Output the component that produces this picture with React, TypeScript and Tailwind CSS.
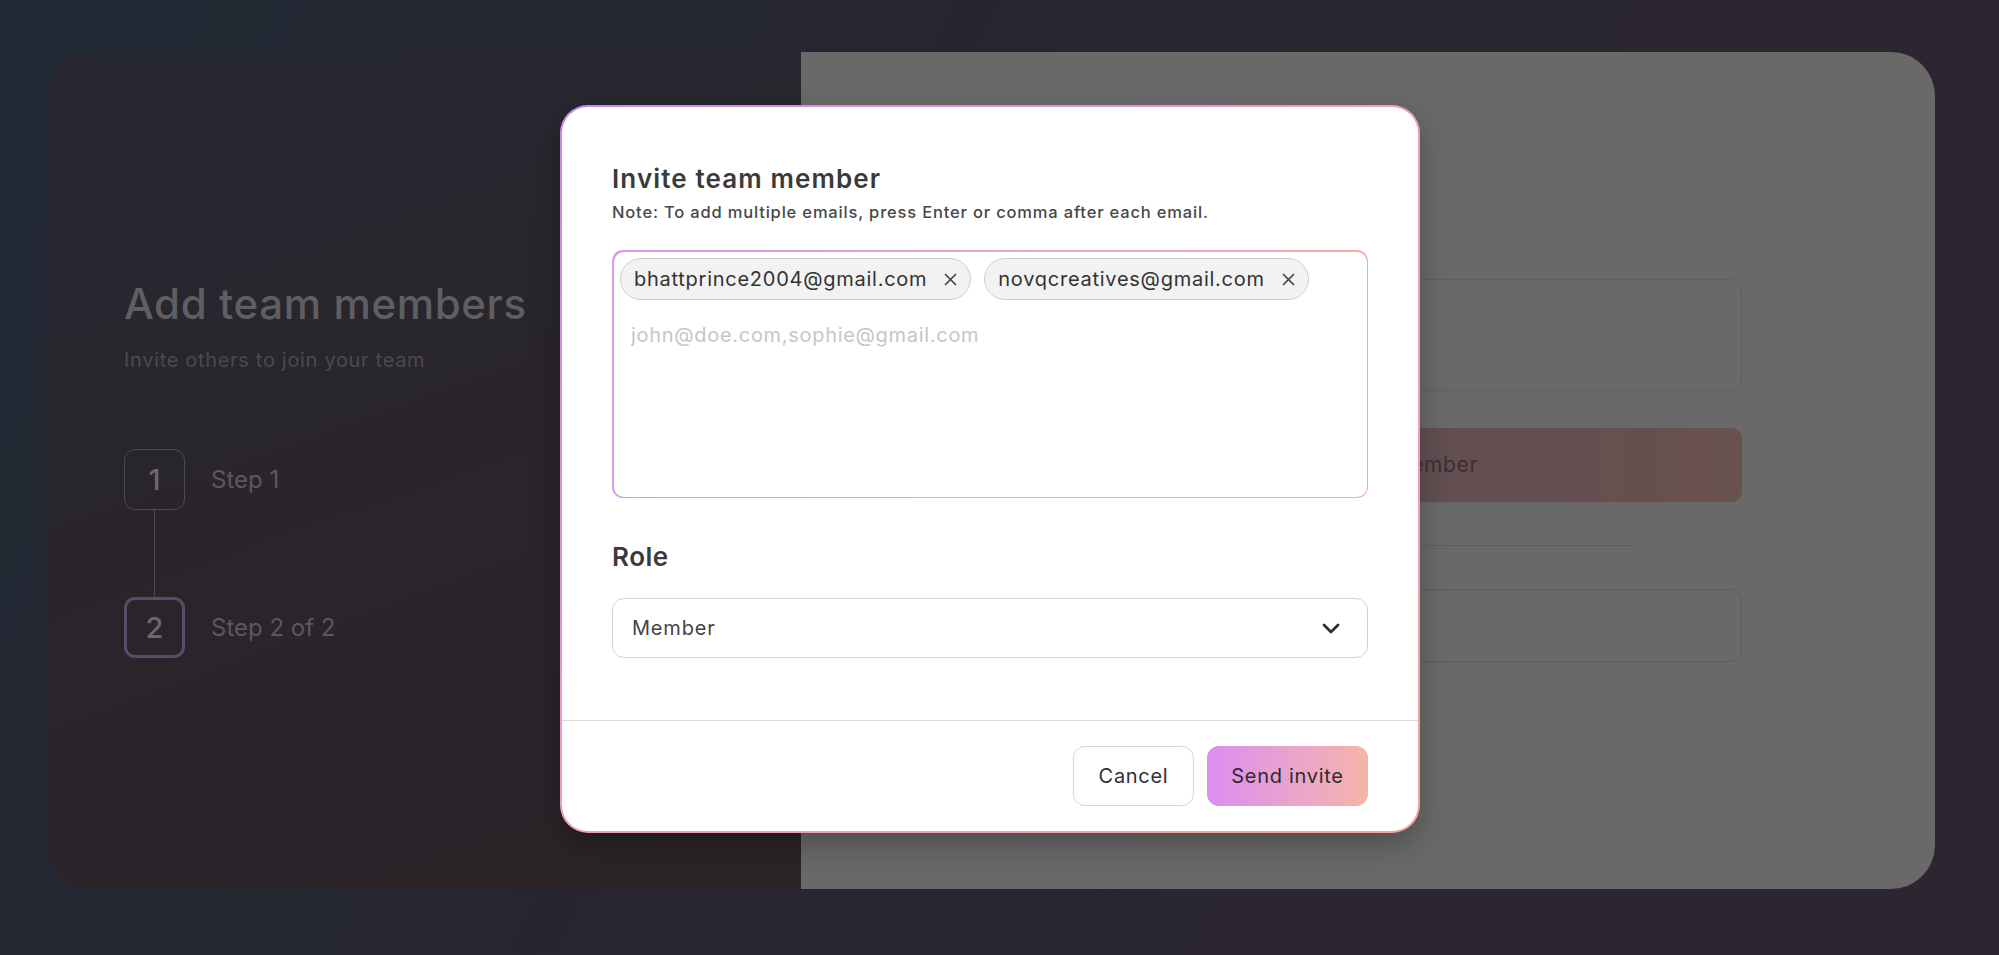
import { useState } from 'react'

const emailsInit = ['bhattprince2004@gmail.com', 'novqcreatives@gmail.com']

function CloseIcon() {
  return (
    <svg width="13" height="13" viewBox="0 0 13 13" fill="none" stroke="#444" strokeWidth="1.7" strokeLinecap="round">
      <path d="M1.5 1.5l10 10M11.5 1.5l-10 10" />
    </svg>
  )
}

function Chevron() {
  return (
    <svg width="18" height="11" viewBox="0 0 18 11" fill="none" stroke="#2e2e2e" strokeWidth="2.8" strokeLinecap="round" strokeLinejoin="round">
      <path d="M2 2l7 7 7-7" />
    </svg>
  )
}

function StepBox({ n, active }: { n: number; active?: boolean }) {
  return (
    <div
      className={
        active
          ? 'flex h-[61px] w-[61px] items-center justify-center rounded-[11px] border-[3px] border-[#594c6b] text-[29px] font-medium text-[#6b696d]'
          : 'flex h-[61px] w-[61px] items-center justify-center rounded-[11px] border-[1.5px] border-[#4c494f] text-[29px] font-medium text-[#6b696d]'
      }
    >
      {n}
    </div>
  )
}

export default function App() {
  const [emails, setEmails] = useState(emailsInit)

  return (
    <div className="relative h-[955px] w-[1999px] overflow-hidden bg-[linear-gradient(115deg,#212a35_0%,#272630_40%,#2c2630_75%,#2e2530_100%)] font-['Inter',sans-serif]">
      {/* Background page (dimmed) */}
      <div className="pl-[46px] pt-[52px]">
        <div className="flex h-[837px] w-[1889px] overflow-hidden rounded-[44px]">
          <div className="w-[755px] bg-[linear-gradient(160deg,#272832_0%,#2a252c_45%,#2b2429_100%)] pl-[78px] pt-[227px]">
            <h1 className="text-[42px] leading-[50px] font-medium tracking-[0.015em] text-[#5f5f61]">Add team members</h1>
            <p className="mt-[17px] text-[20px] leading-[28px] tracking-[0.034em] text-[#4b4a4f]">Invite others to join your team</p>

            <div className="mt-[75px] flex flex-col">
              <div className="flex items-center gap-[26px]">
                <StepBox n={1} />
                <span className="text-[24px] text-[#5a585d]">Step 1</span>
              </div>
              <div className="ml-[30px] h-[87px] w-px bg-[#4c494f]" />
              <div className="flex items-center gap-[26px]">
                <StepBox n={2} active />
                <span className="text-[24px] text-[#5a585d]">Step 2 of 2</span>
              </div>
            </div>
          </div>

          <div className="flex-1 bg-[#696969] pl-[191px] pt-[227px]">
            <div className="flex w-[750px] flex-col">
              <div className="h-[112px] rounded-[12px] border border-[#5f5f5f]" />
              <div className="mt-[37px] flex h-[74px] items-center justify-center rounded-[10px] bg-gradient-to-r from-[#5b4a57] to-[#68514e] pl-[14px] text-[21px] tracking-[0.03em] text-[#3a2f35]">
                Invite team member
              </div>
              <div className="mx-auto mt-[43px] h-px w-[532px] bg-[#5e5e5e]" />
              <div className="mt-[43px] h-[73px] rounded-[12px] border border-[#5d5d5d]" />
            </div>
          </div>
        </div>
      </div>

      {/* Modal */}
      <div className="absolute left-[560px] top-[105px] w-[860px] rounded-[28px] bg-gradient-to-br from-[#c789e4] via-[#ec9fbf] to-[#f2a29a] p-[2px] shadow-[0_12px_30px_rgba(0,0,0,0.25)]">
        <div className="flex flex-col rounded-[26px] bg-white tracking-[0.035em]">
          <div className="px-[50px] pt-[56px] pb-[62px]">
            <h2 className="text-[26px] leading-[32px] font-semibold tracking-[0.043em] text-[#3a3a3a]">Invite team member</h2>
            <p className="mt-[7px] text-[16.5px] leading-[20px] font-medium tracking-[0.05em] text-[#474747]">
              Note: To add multiple emails, press Enter or comma after each email.
            </p>

            <div className="mt-[28px] h-[248px] rounded-[11px] bg-gradient-to-r from-[#d49be9] to-[#f4aea6] p-[1.5px]">
              <div className="h-full rounded-[10px] bg-white px-[6.5px] pt-[6.5px]">
                <div className="flex flex-wrap gap-[13px]">
                  {emails.map((email) => (
                    <div
                      key={email}
                      className="flex h-[42px] items-center gap-[17px] rounded-full border-[1.5px] border-[#cfcfcf] bg-[#f2f2f2] pl-[13px] pr-[13px] text-[20px] tracking-[0.037em] text-[#333]"
                    >
                      <span>{email}</span>
                      <button type="button" onClick={() => setEmails(emails.filter((e) => e !== email))}>
                        <CloseIcon />
                      </button>
                    </div>
                  ))}
                </div>
                <input
                  type="text"
                  placeholder="john@doe.com,sophie@gmail.com"
                  className="mt-[21px] ml-[11px] w-[700px] text-[20px] leading-[28px] tracking-[0.035em] text-[#333] outline-none placeholder:text-[#c6c6c6]"
                />
              </div>
            </div>

            <h3 className="mt-[43px] text-[26px] leading-[32px] font-semibold tracking-[0.02em] text-[#3a3a3a]">Role</h3>
            <div className="mt-[25px] flex h-[60px] items-center justify-between rounded-[12px] border-[1.5px] border-[#d3d3d3] pl-[19px] pr-[27px]">
              <span className="text-[20px] tracking-[0.04em] text-[#444]">Member</span>
              <Chevron />
            </div>
          </div>

          <div className="flex justify-end gap-[13px] border-t border-[#dadada] px-[50px] pt-[25px] pb-[25px]">
            <button
              type="button"
              className="h-[60px] w-[121px] rounded-[12px] border-[1.5px] border-[#d6d6d6] text-[20px] tracking-[0.035em] text-[#2f2f2f]"
            >
              Cancel
            </button>
            <button
              type="button"
              className="h-[60px] w-[161px] rounded-[12px] bg-gradient-to-r from-[#dc8def] to-[#f5b4a7] text-[20px] tracking-[0.035em] text-[#2f2a30]"
            >
              Send invite
            </button>
          </div>
        </div>
      </div>
    </div>
  )
}
